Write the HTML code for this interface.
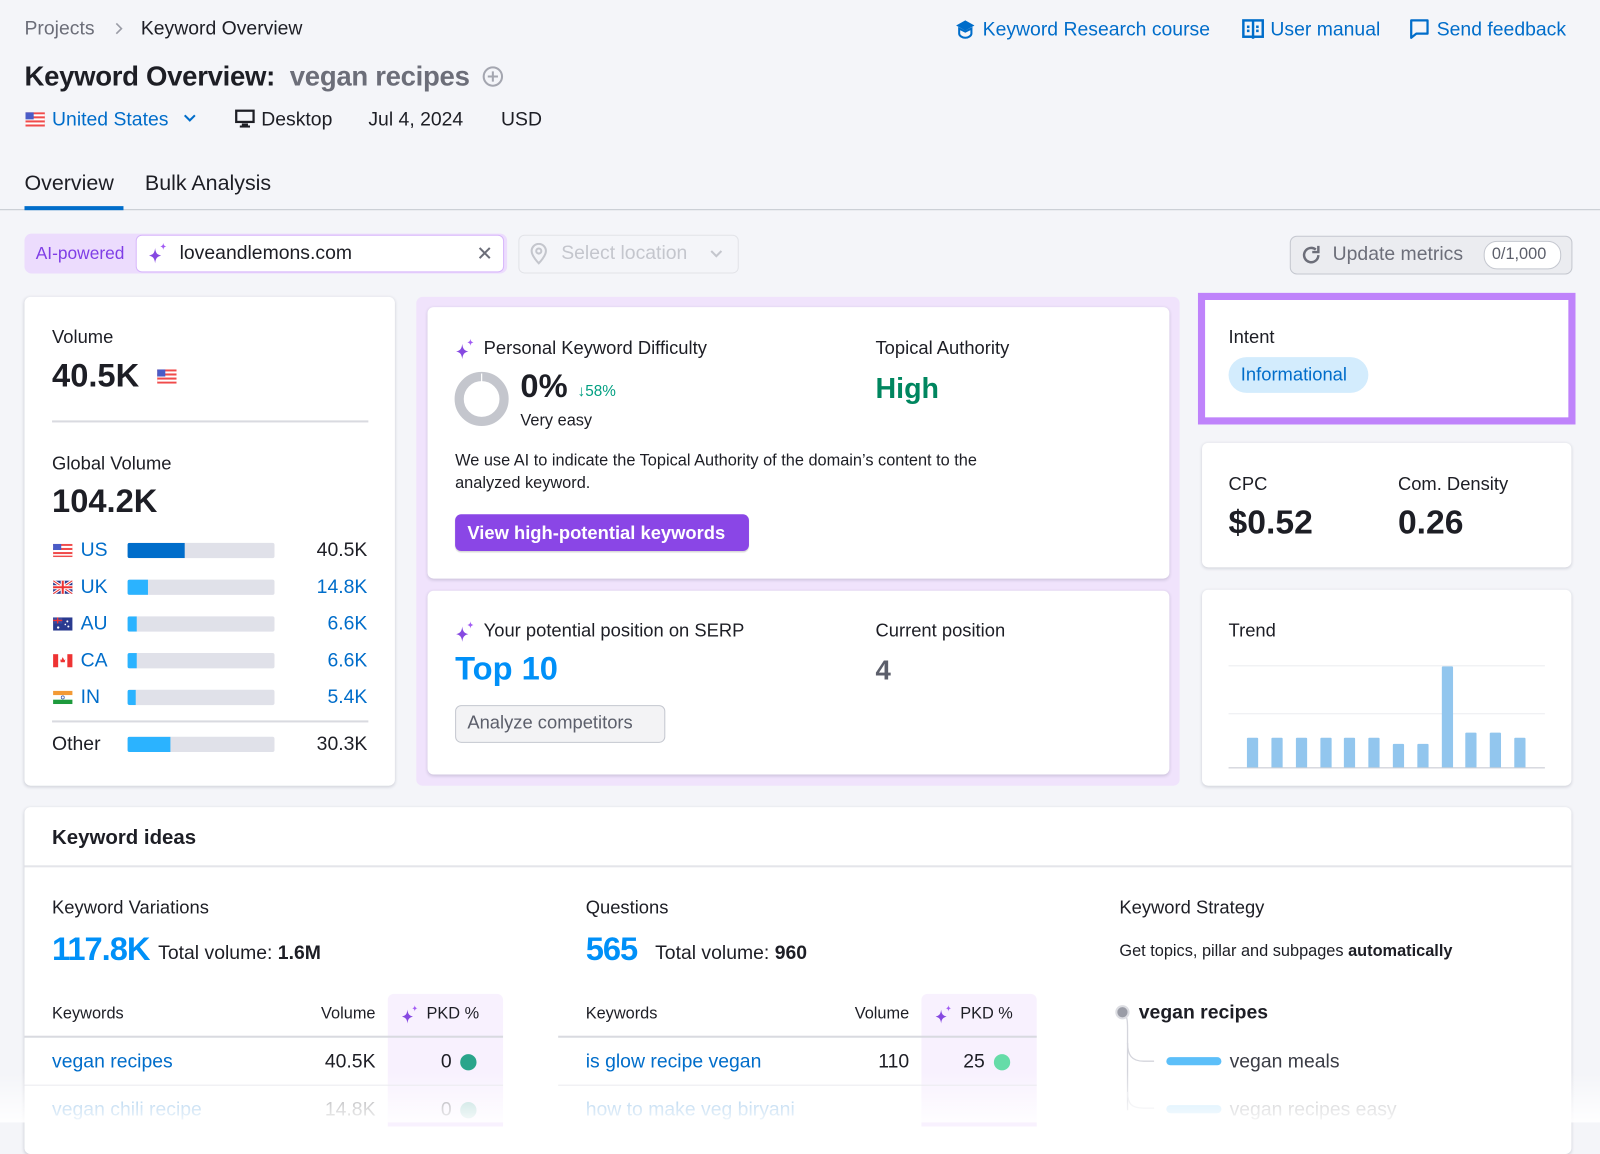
<!DOCTYPE html>
<html><head><meta charset="utf-8"><style>
html,body{margin:0;padding:0;width:1600px;height:1117px;overflow:hidden;background:#f4f5f9;}
#w{position:absolute;left:0;top:0;width:1568px;height:1095px;transform:scale(1.0204);transform-origin:0 0;font-family:"Liberation Sans",Arial,sans-serif;color:#1d1e25;}
.t{position:absolute;white-space:nowrap;line-height:1;}
.a{position:absolute;}
.card{position:absolute;background:#fff;border-radius:6px;box-shadow:0 1px 3px rgba(30,35,60,.18);}
.blue{color:#006dca}
.b{font-weight:bold}
.bar{position:absolute;height:15px;background:#e0e1e9;border-radius:2px;width:144px;left:125px;overflow:hidden}
.bar i{position:absolute;left:0;top:0;bottom:0;background:#2bb3ff}
.tb{position:absolute;width:10.5px;background:#92c6ee;bottom:0;border-radius:1px 1px 0 0}
</style></head><body><div id="w">

<div class="t" style="left:24px;top:19px;font-size:19px;color:#6c6e79">Projects</div>
<svg class="a" style="left:111px;top:21px" width="10" height="14" viewBox="0 0 10 14"><path d="M3 2l5 5-5 5" fill="none" stroke="#9a9ca6" stroke-width="1.6"/></svg>
<div class="t" style="left:138px;top:19px;font-size:19px">Keyword Overview</div>

<svg class="a" style="left:935px;top:19px" width="22" height="20" viewBox="0 0 22 20"><path d="M11 1L2 6l9 5 9-5z" fill="#006dca"/><path d="M5 9v5c0 2 3 4 6 4s6-2 6-4V9l-6 3z" fill="none" stroke="#006dca" stroke-width="2"/></svg>
<div class="t blue" style="left:963px;top:20px;font-size:19px">Keyword Research course</div>
<svg class="a" style="left:1217px;top:18px" width="22" height="22" viewBox="0 0 22 22"><rect x="1.5" y="2" width="19" height="16" fill="none" stroke="#006dca" stroke-width="2.4"/><path d="M11 2v18" stroke="#006dca" stroke-width="2.4"/><rect x="5" y="7" width="2.5" height="2.5" fill="#006dca"/><rect x="14" y="7" width="2.5" height="2.5" fill="#006dca"/><rect x="5" y="11" width="2.5" height="2.5" fill="#006dca"/><rect x="14" y="11" width="2.5" height="2.5" fill="#006dca"/></svg>
<div class="t blue" style="left:1245px;top:20px;font-size:19px">User manual</div>
<svg class="a" style="left:1381px;top:18px" width="20" height="22" viewBox="0 0 20 22"><path d="M2 2h16v13H7l-5 4z" fill="none" stroke="#006dca" stroke-width="2.2" stroke-linejoin="round"/></svg>
<div class="t blue" style="left:1408px;top:20px;font-size:19px">Send feedback</div>

<div class="t b" style="left:24px;top:62px;font-size:27px;letter-spacing:-0.3px">Keyword Overview:</div>
<div class="t b" style="left:284px;top:62px;font-size:27px;letter-spacing:-0.3px;color:#6c6e79">vegan recipes</div>
<svg class="a" style="left:472px;top:64px" width="22" height="22" viewBox="0 0 22 22"><circle cx="11" cy="11" r="9" fill="none" stroke="#a4a6b0" stroke-width="2"/><path d="M11 6v10M6 11h10" stroke="#a4a6b0" stroke-width="2"/></svg>

<svg class="a" style="left:25px;top:110px" width="19" height="14" viewBox="0 0 19 14"><rect width="19" height="14" fill="#f04b4b"/><rect y="2" width="19" height="2" fill="#fff"/><rect y="6" width="19" height="2" fill="#fff"/><rect y="10" width="19" height="2" fill="#fff"/><rect width="8" height="7" fill="#4a5cc7"/></svg>
<div class="t blue" style="left:51px;top:108px;font-size:19px">United States</div>
<svg class="a" style="left:179px;top:111px" width="14" height="10" viewBox="0 0 14 10"><path d="M2 2l5 5 5-5" fill="none" stroke="#006dca" stroke-width="2"/></svg>
<svg class="a" style="left:230px;top:107px" width="20" height="19" viewBox="0 0 20 19"><rect x="1.5" y="1.5" width="17" height="11" fill="none" stroke="#1d1e25" stroke-width="2.2"/><rect x="7" y="14" width="6" height="2" fill="#1d1e25"/><rect x="5" y="16" width="10" height="2" fill="#1d1e25"/></svg>
<div class="t" style="left:256px;top:108px;font-size:19px">Desktop</div>
<div class="t" style="left:361px;top:108px;font-size:19px">Jul 4, 2024</div>
<div class="t" style="left:491px;top:108px;font-size:19px">USD</div>

<div class="t" style="left:24px;top:169px;font-size:21px">Overview</div>
<div class="t" style="left:142px;top:169px;font-size:21px">Bulk Analysis</div>
<div class="a" style="left:0;top:205px;width:1568px;height:1px;background:#c4c7cf"></div>
<div class="a" style="left:24px;top:202px;width:97px;height:4px;background:#006dca"></div>

<div class="a" style="left:24px;top:229px;width:473px;height:39px;background:#ecdcfd;border-radius:7px"></div>
<div class="t" style="left:35px;top:240px;font-size:17px;color:#7f3de6">AI-powered</div>
<div class="a" style="left:133px;top:230px;width:359px;height:35px;background:#fff;border:1.5px solid #d7b6fb;border-radius:6px"></div>
<svg class="a" style="left:145px;top:238px" width="20" height="20" viewBox="0 0 20 20"><path d="M7 5C7.6 10 9 11.5 13 12.5 9 13.5 7.6 15 7 20 6.4 15 5 13.5 1 12.5 5 11.5 6.4 10 7 5z" fill="#8649e1"/><path d="M15 0c.3 2.3 1 3 3 3.5-2 .5-2.7 1.2-3 3.5-.3-2.3-1-3-3-3.5 2-.5 2.7-1.2 3-3.5z" fill="#a25cf4"/></svg>
<div class="t" style="left:176px;top:239px;font-size:19px">loveandlemons.com</div>
<svg class="a" style="left:468px;top:241px" width="14" height="14" viewBox="0 0 14 14"><path d="M2 2l10 10M12 2L2 12" stroke="#6c6e79" stroke-width="2"/></svg>
<div class="a" style="left:508px;top:230px;width:214px;height:36px;border:1px solid #e2e3e8;border-radius:6px;background:#f4f5f9"></div>
<svg class="a" style="left:519px;top:238px" width="18" height="22" viewBox="0 0 18 22"><path d="M9 20s7-7 7-12A7 7 0 0 0 2 8c0 5 7 12 7 12z" fill="none" stroke="#c4c6cd" stroke-width="2"/><circle cx="9" cy="8" r="2.5" fill="none" stroke="#c4c6cd" stroke-width="2"/></svg>
<div class="t" style="left:550px;top:239px;font-size:19px;color:#c4c6cd">Select location</div>
<svg class="a" style="left:695px;top:244px" width="14" height="10" viewBox="0 0 14 10"><path d="M2 2l5 5 5-5" fill="none" stroke="#c4c6cd" stroke-width="2"/></svg>

<div class="a" style="left:1264px;top:231px;width:275px;height:36px;background:#ebecf0;border:1px solid #c4c7cf;border-radius:7px"></div>
<svg class="a" style="left:1274px;top:239px" width="22" height="22" viewBox="0 0 22 22"><path d="M18 11a7 7 0 1 1-2.5-5.4" fill="none" stroke="#6c6e79" stroke-width="2.4"/><path d="M18 2v6h-6" fill="none" stroke="#6c6e79" stroke-width="2.4"/></svg>
<div class="t" style="left:1306px;top:240px;font-size:19px;color:#6c6e79">Update metrics</div>
<div class="a" style="left:1454px;top:236px;width:74px;height:26px;background:#fff;border:1px solid #c4c7cf;border-radius:13px"></div>
<div class="t" style="left:1462px;top:242px;font-size:16px;color:#5c5f6b">0/1,000</div>

<div class="card" style="left:24px;top:291px;width:363px;height:479px"></div>
<div class="t" style="left:51px;top:321px;font-size:18px">Volume</div>
<div class="t b" style="left:51px;top:352px;font-size:32px">40.5K</div>
<svg class="a" style="left:154px;top:362px" width="19" height="14" viewBox="0 0 19 14"><rect width="19" height="14" fill="#f04b4b"/><rect y="2" width="19" height="2" fill="#fff"/><rect y="6" width="19" height="2" fill="#fff"/><rect y="10" width="19" height="2" fill="#fff"/><rect width="8" height="7" fill="#4a5cc7"/></svg>
<div class="a" style="left:51px;top:412px;width:310px;height:2px;background:#d9dae0"></div>
<div class="t" style="left:51px;top:445px;font-size:18px">Global Volume</div>
<div class="t b" style="left:51px;top:475px;font-size:32px">104.2K</div>

<svg class="a" style="left:52px;top:533px" width="19" height="13" viewBox="0 0 19 13"><rect width="19" height="13" fill="#f04b4b"/><rect y="2" width="19" height="2" fill="#fff"/><rect y="6" width="19" height="2" fill="#fff"/><rect y="10" width="19" height="1.5" fill="#fff"/><rect width="8" height="6" fill="#4a5cc7"/></svg>
<div class="t blue" style="left:79px;top:530px;font-size:19px">US</div>
<div class="bar" style="top:532px"><i style="width:56px;background:#006dca"></i></div>
<div class="t" style="right:1208px;top:530px;font-size:19px">40.5K</div>

<svg class="a" style="left:52px;top:569px" width="19" height="13" viewBox="0 0 19 13"><rect width="19" height="13" fill="#2a3a8f"/><path d="M0 0l19 13M19 0L0 13" stroke="#fff" stroke-width="3"/><path d="M0 0l19 13M19 0L0 13" stroke="#e33" stroke-width="1"/><path d="M9.5 0v13M0 6.5h19" stroke="#fff" stroke-width="4"/><path d="M9.5 0v13M0 6.5h19" stroke="#e33" stroke-width="2"/></svg>
<div class="t blue" style="left:79px;top:566px;font-size:19px">UK</div>
<div class="bar" style="top:568px"><i style="width:20px"></i></div>
<div class="t blue" style="right:1208px;top:566px;font-size:19px">14.8K</div>

<svg class="a" style="left:52px;top:605px" width="19" height="13" viewBox="0 0 19 13"><rect width="19" height="13" fill="#2a3a8f"/><path d="M0 0h9v6H0z" fill="#3b4aa0"/><path d="M0 3h9M4.5 0v6" stroke="#e33" stroke-width="1.3"/><circle cx="5" cy="10" r="1.2" fill="#fff"/><circle cx="14" cy="4" r="1" fill="#fff"/><circle cx="15" cy="9" r="1" fill="#fff"/><circle cx="12" cy="7" r=".8" fill="#fff"/></svg>
<div class="t blue" style="left:79px;top:602px;font-size:19px">AU</div>
<div class="bar" style="top:604px"><i style="width:9px"></i></div>
<div class="t blue" style="right:1208px;top:602px;font-size:19px">6.6K</div>

<svg class="a" style="left:52px;top:641px" width="19" height="13" viewBox="0 0 19 13"><rect width="19" height="13" fill="#fff"/><rect width="5" height="13" fill="#e33"/><rect x="14" width="5" height="13" fill="#e33"/><path d="M9.5 3l1.5 3 1-1-.5 3h-4l-.5-3 1 1z" fill="#e33"/></svg>
<div class="t blue" style="left:79px;top:638px;font-size:19px">CA</div>
<div class="bar" style="top:640px"><i style="width:9px"></i></div>
<div class="t blue" style="right:1208px;top:638px;font-size:19px">6.6K</div>

<svg class="a" style="left:52px;top:677px" width="19" height="13" viewBox="0 0 19 13"><rect width="19" height="4.3" fill="#f39a35"/><rect y="4.3" width="19" height="4.4" fill="#fff"/><rect y="8.7" width="19" height="4.3" fill="#1d9a3c"/><circle cx="9.5" cy="6.5" r="1.5" fill="none" stroke="#3355aa" stroke-width=".7"/></svg>
<div class="t blue" style="left:79px;top:674px;font-size:19px">IN</div>
<div class="bar" style="top:676px"><i style="width:8px"></i></div>
<div class="t blue" style="right:1208px;top:674px;font-size:19px">5.4K</div>

<div class="a" style="left:51px;top:706px;width:310px;height:2px;background:#d9dae0"></div>
<div class="t" style="left:51px;top:720px;font-size:19px">Other</div>
<div class="bar" style="top:722px"><i style="width:42px"></i></div>
<div class="t" style="right:1208px;top:720px;font-size:19px">30.3K</div>

<div class="a" style="left:408px;top:291px;width:748px;height:479px;background:#f0e3fc;border-radius:6px"></div>
<div class="card" style="left:419px;top:301px;width:727px;height:266px"></div>
<svg class="a" style="left:446px;top:332px" width="20" height="20" viewBox="0 0 20 20"><path d="M7 5C7.6 10 9 11.5 13 12.5 9 13.5 7.6 15 7 20 6.4 15 5 13.5 1 12.5 5 11.5 6.4 10 7 5z" fill="#8649e1"/><path d="M15 0c.3 2.3 1 3 3 3.5-2 .5-2.7 1.2-3 3.5-.3-2.3-1-3-3-3.5 2-.5 2.7-1.2 3-3.5z" fill="#a25cf4"/></svg>
<div class="t" style="left:474px;top:332px;font-size:18px">Personal Keyword Difficulty</div>
<svg class="a" style="left:445px;top:364px" width="54" height="54" viewBox="0 0 54 54"><circle cx="27" cy="27" r="22" fill="none" stroke="#c4c6cd" stroke-width="9"/><path d="M27 2v9" stroke="#fff" stroke-width="1.2"/></svg>
<div class="t b" style="left:510px;top:362px;font-size:32px">0%</div>
<div class="t" style="left:566px;top:376px;font-size:15px;color:#009f81">↓58%</div>
<div class="t" style="left:510px;top:405px;font-size:16px">Very easy</div>
<div class="t" style="left:858px;top:332px;font-size:18px">Topical Authority</div>
<div class="t b" style="left:858px;top:367px;font-size:28px;color:#00865f">High</div>
<div class="t" style="left:446px;top:441px;font-size:16px;line-height:21.5px">We use AI to indicate the Topical Authority of the domain’s content to the<br>analyzed keyword.</div>
<div class="a" style="left:446px;top:504px;width:288px;height:36px;background:#8a46e6;border-radius:6px;box-shadow:0 1px 1px rgba(0,0,0,.15)"></div>
<div class="t" style="left:458px;top:513px;font-size:18px;color:#fff;font-weight:600">View high-potential keywords</div>

<div class="card" style="left:419px;top:579px;width:727px;height:180px"></div>
<svg class="a" style="left:446px;top:609px" width="20" height="20" viewBox="0 0 20 20"><path d="M7 5C7.6 10 9 11.5 13 12.5 9 13.5 7.6 15 7 20 6.4 15 5 13.5 1 12.5 5 11.5 6.4 10 7 5z" fill="#8649e1"/><path d="M15 0c.3 2.3 1 3 3 3.5-2 .5-2.7 1.2-3 3.5-.3-2.3-1-3-3-3.5 2-.5 2.7-1.2 3-3.5z" fill="#a25cf4"/></svg>
<div class="t" style="left:474px;top:609px;font-size:18px">Your potential position on SERP</div>
<div class="t b" style="left:446px;top:639px;font-size:32px;color:#0090f8">Top 10</div>
<div class="t" style="left:858px;top:609px;font-size:18px">Current position</div>
<div class="t b" style="left:858px;top:644px;font-size:27px;color:#5c5f6b">4</div>
<div class="a" style="left:446px;top:691px;width:204px;height:35px;background:#f3f3f5;border:1px solid #c4c7cf;border-radius:6px"></div>
<div class="t" style="left:458px;top:699px;font-size:18px;color:#5c5f6b">Analyze competitors</div>

<div class="a" style="left:1174px;top:287px;width:356px;height:115px;background:#fff;border:7px solid #bf83fb"></div>
<div class="t" style="left:1204px;top:321px;font-size:18px">Intent</div>
<div class="a" style="left:1204px;top:350px;width:137px;height:35px;background:#d3ecfd;border-radius:18px"></div>
<div class="t blue" style="left:1216px;top:358px;font-size:18px">Informational</div>

<div class="card" style="left:1178px;top:434px;width:362px;height:122px"></div>
<div class="t" style="left:1204px;top:465px;font-size:18px">CPC</div>
<div class="t b" style="left:1204px;top:495px;font-size:33px">$0.52</div>
<div class="t" style="left:1370px;top:465px;font-size:18px">Com. Density</div>
<div class="t b" style="left:1370px;top:495px;font-size:33px">0.26</div>

<div class="card" style="left:1178px;top:578px;width:362px;height:192px"></div>
<div class="t" style="left:1204px;top:609px;font-size:18px">Trend</div>
<div class="a" style="left:1204px;top:652px;width:310px;height:1px;background:#ebecf0"></div>
<div class="a" style="left:1204px;top:699px;width:310px;height:1px;background:#ebecf0"></div>
<div class="a" style="left:1204px;top:752px;width:310px;height:1px;background:#c4c7cf"></div>
<div class="a" style="left:1204px;top:653px;width:310px;height:99px">
<div class="tb" style="left:18px;height:29px"></div>
<div class="tb" style="left:42px;height:29px"></div>
<div class="tb" style="left:66px;height:29px"></div>
<div class="tb" style="left:90px;height:29px"></div>
<div class="tb" style="left:113px;height:29px"></div>
<div class="tb" style="left:137px;height:29px"></div>
<div class="tb" style="left:161px;height:23px"></div>
<div class="tb" style="left:185px;height:23px"></div>
<div class="tb" style="left:209px;height:99px"></div>
<div class="tb" style="left:232px;height:34px"></div>
<div class="tb" style="left:256px;height:34px"></div>
<div class="tb" style="left:280px;height:29px"></div>
</div>

<div class="card" style="left:24px;top:791px;width:1516px;height:340px"></div>
<div class="t b" style="left:51px;top:811px;font-size:20px">Keyword ideas</div>
<div class="a" style="left:24px;top:848px;width:1516px;height:2px;background:#e4e5ea"></div>

<div class="t" style="left:51px;top:880px;font-size:18px">Keyword Variations</div>
<div class="t b" style="left:51px;top:914px;font-size:32px;letter-spacing:-1px;color:#0090f8">117.8K</div>
<div class="t" style="left:155px;top:925px;font-size:19px">Total volume: <b>1.6M</b></div>

<div class="t" style="left:574px;top:880px;font-size:18px">Questions</div>
<div class="t b" style="left:574px;top:914px;font-size:32px;letter-spacing:-1px;color:#0090f8">565</div>
<div class="t" style="left:642px;top:925px;font-size:19px">Total volume: <b>960</b></div>

<div class="t" style="left:1097px;top:880px;font-size:18px">Keyword Strategy</div>
<div class="t" style="left:1097px;top:925px;font-size:16px">Get topics, pillar and subpages <b>automatically</b></div>

<div class="a" style="left:380px;top:974px;width:113px;height:130px;background:#f8f1fe;border-radius:6px 6px 0 0"></div>
<div class="t" style="left:51px;top:986px;font-size:16px">Keywords</div>
<div class="t" style="right:1200px;top:986px;font-size:16px">Volume</div>
<svg class="a" style="left:393px;top:985px" width="18" height="18" viewBox="0 0 20 20"><path d="M7 5C7.6 10 9 11.5 13 12.5 9 13.5 7.6 15 7 20 6.4 15 5 13.5 1 12.5 5 11.5 6.4 10 7 5z" fill="#8649e1"/><path d="M15 0c.3 2.3 1 3 3 3.5-2 .5-2.7 1.2-3 3.5-.3-2.3-1-3-3-3.5 2-.5 2.7-1.2 3-3.5z" fill="#a25cf4"/></svg>
<div class="t" style="left:418px;top:986px;font-size:16px">PKD %</div>
<div class="a" style="left:24px;top:1015px;width:469px;height:2px;background:#d9dae0"></div>
<div class="t blue" style="left:51px;top:1031px;font-size:19px">vegan recipes</div>
<div class="t" style="right:1200px;top:1031px;font-size:19px">40.5K</div>
<div class="t" style="left:432px;top:1031px;font-size:19px">0</div>
<div class="a" style="left:451px;top:1033px;width:16px;height:16px;border-radius:50%;background:#2aa58b"></div>
<div class="a" style="left:24px;top:1063px;width:469px;height:1px;background:#e4e5ea"></div>
<div class="t blue" style="left:51px;top:1078px;font-size:19px;opacity:.5">vegan chili recipe</div>
<div class="t" style="right:1200px;top:1078px;font-size:19px;opacity:.5">14.8K</div>
<div class="t" style="left:432px;top:1078px;font-size:19px;opacity:.5">0</div>
<div class="a" style="left:451px;top:1080px;width:16px;height:16px;border-radius:50%;background:#2aa58b;opacity:.4"></div>

<div class="a" style="left:903px;top:974px;width:113px;height:130px;background:#f8f1fe;border-radius:6px 6px 0 0"></div>
<div class="t" style="left:574px;top:986px;font-size:16px">Keywords</div>
<div class="t" style="right:677px;top:986px;font-size:16px">Volume</div>
<svg class="a" style="left:916px;top:985px" width="18" height="18" viewBox="0 0 20 20"><path d="M7 5C7.6 10 9 11.5 13 12.5 9 13.5 7.6 15 7 20 6.4 15 5 13.5 1 12.5 5 11.5 6.4 10 7 5z" fill="#8649e1"/><path d="M15 0c.3 2.3 1 3 3 3.5-2 .5-2.7 1.2-3 3.5-.3-2.3-1-3-3-3.5 2-.5 2.7-1.2 3-3.5z" fill="#a25cf4"/></svg>
<div class="t" style="left:941px;top:986px;font-size:16px">PKD %</div>
<div class="a" style="left:547px;top:1015px;width:469px;height:2px;background:#d9dae0"></div>
<div class="t blue" style="left:574px;top:1031px;font-size:19px">is glow recipe vegan</div>
<div class="t" style="right:677px;top:1031px;font-size:19px">110</div>
<div class="t" style="left:944px;top:1031px;font-size:19px">25</div>
<div class="a" style="left:974px;top:1033px;width:16px;height:16px;border-radius:50%;background:#66dca8"></div>
<div class="a" style="left:547px;top:1063px;width:469px;height:1px;background:#e4e5ea"></div>
<div class="t blue" style="left:574px;top:1078px;font-size:19px;opacity:.5">how to make veg biryani</div>

<svg class="a" style="left:1090px;top:982px" width="60" height="113" viewBox="0 0 60 113"><path d="M10 10c5 4 5 8 5 16v80" fill="none" stroke="#d4d5dc" stroke-width="1.3"/><path d="M15 40c0 12 4 18 16 18h10" fill="none" stroke="#d4d5dc" stroke-width="1.3"/><path d="M15 88c0 12 4 16 16 16h10" fill="none" stroke="#e4e5ea" stroke-width="1.3"/><circle cx="10" cy="10" r="6" fill="#9a9ca6" stroke="#dcdde2" stroke-width="2"/></svg>
<div class="t b" style="left:1116px;top:983px;font-size:19px">vegan recipes</div>
<div class="a" style="left:1143px;top:1036px;width:54px;height:8px;border-radius:4px;background:#5cbff9"></div>
<div class="t" style="left:1205px;top:1031px;font-size:19px;color:#3a3c45">vegan meals</div>
<div class="a" style="left:1143px;top:1083px;width:54px;height:8px;border-radius:4px;background:#5cbff9;opacity:.4"></div>
<div class="t" style="left:1205px;top:1078px;font-size:19px;color:#3a3c45;opacity:.4">vegan recipes easy</div>

<div class="a" style="left:0;top:1050px;width:1568px;height:50px;background:linear-gradient(rgba(255,255,255,0),rgba(255,255,255,.9))"></div>
</div></body></html>
